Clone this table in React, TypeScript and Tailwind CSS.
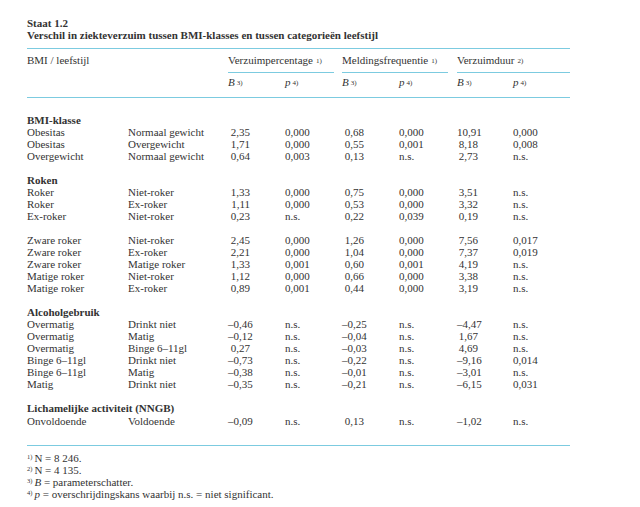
type Row = {
  a: string;
  b: string;
  v: [string, string, string, string, string, string];
};

type Section = { title: string; groups: Row[][] };

const sections: Section[] = [
  {
    title: "BMI-klasse",
    groups: [
      [
        { a: "Obesitas", b: "Normaal gewicht", v: ["2,35", "0,000", "0,68", "0,000", "10,91", "0,000"] },
        { a: "Obesitas", b: "Overgewicht", v: ["1,71", "0,000", "0,55", "0,001", "8,18", "0,008"] },
        { a: "Overgewicht", b: "Normaal gewicht", v: ["0,64", "0,003", "0,13", "n.s.", "2,73", "n.s."] },
      ],
    ],
  },
  {
    title: "Roken",
    groups: [
      [
        { a: "Roker", b: "Niet-roker", v: ["1,33", "0,000", "0,75", "0,000", "3,51", "n.s."] },
        { a: "Roker", b: "Ex-roker", v: ["1,11", "0,000", "0,53", "0,000", "3,32", "n.s."] },
        { a: "Ex-roker", b: "Niet-roker", v: ["0,23", "n.s.", "0,22", "0,039", "0,19", "n.s."] },
      ],
      [
        { a: "Zware roker", b: "Niet-roker", v: ["2,45", "0,000", "1,26", "0,000", "7,56", "0,017"] },
        { a: "Zware roker", b: "Ex-roker", v: ["2,21", "0,000", "1,04", "0,000", "7,37", "0,019"] },
        { a: "Zware roker", b: "Matige roker", v: ["1,33", "0,001", "0,60", "0,001", "4,19", "n.s."] },
        { a: "Matige roker", b: "Niet-roker", v: ["1,12", "0,000", "0,66", "0,000", "3,38", "n.s."] },
        { a: "Matige roker", b: "Ex-roker", v: ["0,89", "0,001", "0,44", "0,000", "3,19", "n.s."] },
      ],
    ],
  },
  {
    title: "Alcoholgebruik",
    groups: [
      [
        { a: "Overmatig", b: "Drinkt niet", v: ["–0,46", "n.s.", "–0,25", "n.s.", "–4,47", "n.s."] },
        { a: "Overmatig", b: "Matig", v: ["–0,12", "n.s.", "–0,04", "n.s.", "1,67", "n.s."] },
        { a: "Overmatig", b: "Binge 6–11gl", v: ["0,27", "n.s.", "–0,03", "n.s.", "4,69", "n.s."] },
        { a: "Binge 6–11gl", b: "Drinkt niet", v: ["–0,73", "n.s.", "–0,22", "n.s.", "–9,16", "0,014"] },
        { a: "Binge 6–11gl", b: "Matig", v: ["–0,38", "n.s.", "–0,01", "n.s.", "–3,01", "n.s."] },
        { a: "Matig", b: "Drinkt niet", v: ["–0,35", "n.s.", "–0,21", "n.s.", "–6,15", "0,031"] },
      ],
    ],
  },
];

// superscript note marker, e.g. 1)
function Sup({ children, gap = "ml-[3px]" }: { children: React.ReactNode; gap?: string }) {
  return <sup className={`text-[7px] not-italic relative -top-[1px] ${gap}`}>{children}</sup>;
}

function DataRow({ r }: { r: Row }) {
  return (
    <div className="flex h-[12px] leading-[12px] whitespace-nowrap">
      <div className="w-[101px]">{r.a}</div>
      <div className="w-[100px]">{r.b}</div>
      <div className="w-[57px] pr-[35px] text-right">{r.v[0]}</div>
      <div className="w-[57px]">{r.v[1]}</div>
      <div className="w-[57px] pr-[35px] text-right">{r.v[2]}</div>
      <div className="w-[58px]">{r.v[3]}</div>
      <div className="w-[56px] pr-[35px] text-right">{r.v[4]}</div>
      <div className="w-[57px]">{r.v[5]}</div>
    </div>
  );
}

export default function App() {
  return (
    <div className="w-[640px] h-[507px] bg-white text-[#333333] font-['Liberation_Serif',serif] text-[11px] pl-[27px] pt-[17px]">
      <div className="w-[543px]">
        <div className="font-bold leading-[12px]">Staat 1.2</div>
        <div className="font-bold leading-[12px]">
          Verschil in ziekteverzuim tussen BMI-klasses en tussen categorieën leefstijl
        </div>
        <div className="mt-[7px] h-[1px] bg-[#7ccbe0]" />

        <div className="flex mt-[5px] h-[12px] leading-[12px] whitespace-nowrap">
          <div className="w-[201px]">BMI / leefstijl</div>
          <div className="w-[114px]">
            Verzuimpercentage<Sup>1)</Sup>
          </div>
          <div className="w-[115px]">
            Meldingsfrequentie<Sup>1)</Sup>
          </div>
          <div className="w-[113px]">
            Verzuimduur<Sup>2)</Sup>
          </div>
        </div>
        <div className="flex mt-[6px]">
          <div className="w-[201px]" />
          <div className="w-[114px] pr-[8px]">
            <div className="h-[1px] bg-[#7ccbe0]" />
          </div>
          <div className="w-[115px] pr-[9px]">
            <div className="h-[1px] bg-[#7ccbe0]" />
          </div>
          <div className="w-[113px]">
            <div className="h-[1px] bg-[#7ccbe0]" />
          </div>
        </div>
        <div className="flex mt-[3px] h-[12px] leading-[12px] whitespace-nowrap italic">
          <div className="w-[201px]" />
          <div className="w-[57px]">B<Sup gap="ml-[2px]">3)</Sup></div>
          <div className="w-[57px]">p<Sup gap="ml-[2px]">4)</Sup></div>
          <div className="w-[57px]">B<Sup gap="ml-[2px]">3)</Sup></div>
          <div className="w-[58px]">p<Sup gap="ml-[2px]">4)</Sup></div>
          <div className="w-[56px]">B<Sup gap="ml-[2px]">3)</Sup></div>
          <div className="w-[57px]">p<Sup gap="ml-[2px]">4)</Sup></div>
        </div>
        <div className="mt-[9px] h-[1px] bg-[#7ccbe0]" />

        <div className="mt-[16px] flex flex-col gap-[12px]">
          {sections.map((s) => (
            <div key={s.title}>
              <div className="font-bold h-[12px] leading-[12px]">{s.title}</div>
              <div className="flex flex-col gap-[12px]">
                {s.groups.map((g, i) => (
                  <div key={i}>
                    {g.map((r, j) => (
                      <DataRow key={j} r={r} />
                    ))}
                  </div>
                ))}
              </div>
            </div>
          ))}
          <div>
            <div className="font-bold h-[12px] leading-[12px]">Lichamelijke activiteit (NNGB)</div>
            <div className="mt-[1px]">
              <DataRow r={{ a: "Onvoldoende", b: "Voldoende", v: ["–0,09", "n.s.", "0,13", "n.s.", "–1,02", "n.s."] }} />
            </div>
          </div>
        </div>

        <div className="mt-[18px] h-[1px] bg-[#7ccbe0]" />

        <div className="mt-[6px] leading-[12px] whitespace-nowrap">
          <div><sup className="text-[6.5px] mr-[2px]">1)</sup>N = 8 246.</div>
          <div><sup className="text-[6.5px] mr-[2px]">2)</sup>N = 4 135.</div>
          <div><sup className="text-[6.5px] mr-[2px]">3)</sup><i>B</i> = parameterschatter.</div>
          <div><sup className="text-[6.5px] mr-[2px]">4)</sup><i>p</i> = overschrijdingskans waarbij n.s. = niet significant.</div>
        </div>
      </div>
    </div>
  );
}
